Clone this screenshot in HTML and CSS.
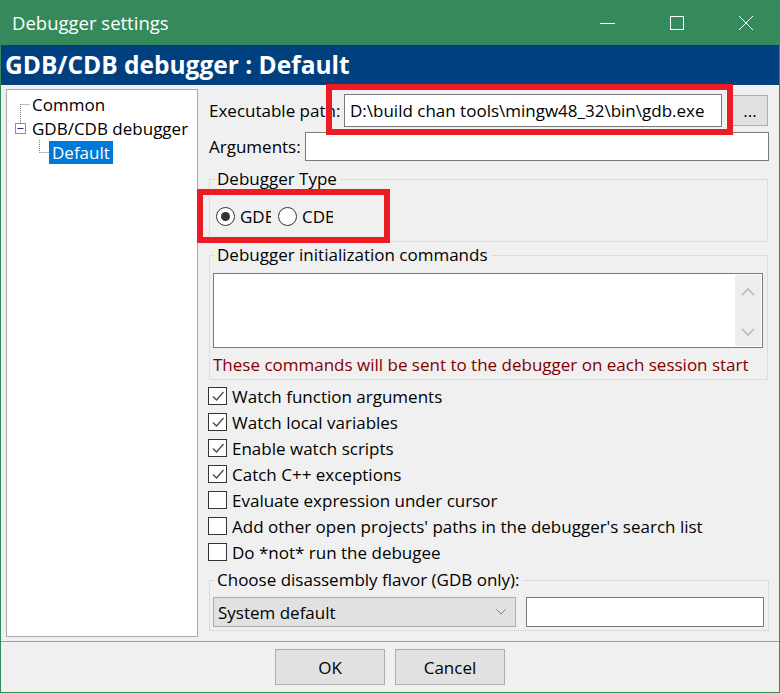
FILE: index.html
```html
<!DOCTYPE html>
<html lang="en">
<head>
  <meta charset="UTF-8">
  <meta name="viewport" content="width=device-width, initial-scale=1.0">
  <title>Debugger settings</title>
  <link rel="stylesheet" href="styles.css">
</head>
<body>
  <div class="window">
    <div class="titlebar">
      <span class="title">Debugger settings</span>
      <div class="caption-btns">
        <span class="cap-btn">
          <svg width="16" height="16" viewBox="0 0 16 16"><path d="M0 8.5H15" stroke="#fff" fill="none"/></svg>
        </span>
        <span class="cap-btn">
          <svg width="16" height="16" viewBox="0 0 16 16"><rect x="1.5" y="1.5" width="13" height="13" stroke="#fff" fill="none"/></svg>
        </span>
        <span class="cap-btn">
          <svg width="16" height="16" viewBox="0 0 16 16"><path d="M1 1L15 15M15 1L1 15" stroke="#fff" fill="none"/></svg>
        </span>
      </div>
    </div>

    <div class="banner">GDB/CDB debugger : Default</div>

    <div class="content">
      <!-- Settings tree -->
      <div class="tree">
        <div class="tree-row">
          <svg class="tree-line" width="18" height="24" viewBox="0 0 18 24">
            <path d="M6.5 12V24M6.5 12.5H16" stroke="#7a7a7a" stroke-dasharray="1 1" fill="none"/>
          </svg>
          <span class="tree-text">Common</span>
        </div>
        <div class="tree-row">
          <svg class="tree-line" width="18" height="24" viewBox="0 0 18 24">
            <path d="M6.5 0V7" stroke="#7a7a7a" stroke-dasharray="1 1" fill="none"/>
            <rect x="1.5" y="7.5" width="10" height="10" fill="#fff" stroke="#919191"/>
            <path d="M3.5 12.5H9.5" stroke="#2b2b9a" fill="none"/>
          </svg>
          <span class="tree-text">GDB/CDB debugger</span>
        </div>
        <div class="tree-row tree-child">
          <svg class="tree-line" width="16" height="24" viewBox="0 0 16 24">
            <path d="M6.5 0V12.5M6.5 12.5H16" stroke="#7a7a7a" stroke-dasharray="1 1" fill="none"/>
          </svg>
          <span class="tree-text selected">Default</span>
        </div>
      </div>

      <!-- Settings panel -->
      <div class="panel">
        <div class="field-row path-row">
          <label class="field-label path-label">Executable path:</label>
          <div class="text-input path-input">D:\build chan tools\mingw48_32\bin\gdb.exe</div>
          <button class="btn browse-btn">...</button>
        </div>
        <div class="field-row args-row">
          <label class="field-label args-label">Arguments:</label>
          <div class="text-input args-input"></div>
        </div>

        <fieldset class="group type-group">
          <legend>Debugger Type</legend>
          <div class="radio-row">
            <span class="radio checked"></span>
            <span class="radio-text">GDB</span>
            <span class="radio"></span>
            <span class="radio-text">CDB</span>
          </div>
        </fieldset>

        <fieldset class="group init-group">
          <legend>Debugger initialization commands</legend>
          <div class="textarea">
            <div class="scrollbar">
              <svg width="14" height="10" viewBox="0 0 14 10"><path d="M1 8L7 2L13 8" stroke="#c2c2c2" stroke-width="2" fill="none"/></svg>
              <svg width="14" height="10" viewBox="0 0 14 10"><path d="M1 2L7 8L13 2" stroke="#c2c2c2" stroke-width="2" fill="none"/></svg>
            </div>
          </div>
          <p class="hint">These commands will be sent to the debugger on each session start</p>
        </fieldset>

        <div class="checks">
          <div class="check-row"><span class="checkbox checked"><svg width="16" height="16" viewBox="0 0 16 16"><path d="M3 8.5L6.5 12L13.5 4" stroke="#444" stroke-width="1.2" fill="none"/></svg></span>Watch function arguments</div>
          <div class="check-row"><span class="checkbox checked"><svg width="16" height="16" viewBox="0 0 16 16"><path d="M3 8.5L6.5 12L13.5 4" stroke="#444" stroke-width="1.2" fill="none"/></svg></span>Watch local variables</div>
          <div class="check-row"><span class="checkbox checked"><svg width="16" height="16" viewBox="0 0 16 16"><path d="M3 8.5L6.5 12L13.5 4" stroke="#444" stroke-width="1.2" fill="none"/></svg></span>Enable watch scripts</div>
          <div class="check-row"><span class="checkbox checked"><svg width="16" height="16" viewBox="0 0 16 16"><path d="M3 8.5L6.5 12L13.5 4" stroke="#444" stroke-width="1.2" fill="none"/></svg></span>Catch C++ exceptions</div>
          <div class="check-row"><span class="checkbox"></span>Evaluate expression under cursor</div>
          <div class="check-row"><span class="checkbox"></span>Add other open projects' paths in the debugger's search list</div>
          <div class="check-row"><span class="checkbox"></span>Do *not* run the debugee</div>
        </div>

        <fieldset class="group flavor-group">
          <legend>Choose disassembly flavor (GDB only):</legend>
          <div class="flavor-row">
            <div class="select">
              <span>System default</span>
              <svg width="10" height="6" viewBox="0 0 10 6"><path d="M0.5 0.5L5 5L9.5 0.5" stroke="#777" fill="none"/></svg>
            </div>
            <div class="text-input flavor-input"></div>
          </div>
        </fieldset>
      </div>
    </div>

    <div class="footer">
      <button class="btn dlg-btn">OK</button>
      <button class="btn dlg-btn">Cancel</button>
    </div>

    <!-- red annotation frames -->
    <div class="mark mark-path"></div>
    <div class="mark mark-type"></div>
  </div>
</body>
</html>
```

FILE: styles.css
```css
/* Reset styles */
* {
  margin: 0;
  padding: 0;
  box-sizing: border-box;
}

body {
  font-family: "Open Sans", "Noto Sans", sans-serif;
  font-size: 17px;
  color: #000;
  background: #fff;
}

.window {
  position: relative;
  width: 780px;
  height: 693px;
  background-color: #f0f0f0;
  border: 1px solid #358a5b;
  border-top: none;
  display: flex;
  flex-direction: column;
  overflow: hidden;
}

/* Title bar */
.titlebar {
  height: 45px;
  margin: 0 -1px;
  background-color: #358a5b;
  color: #fff;
  display: flex;
  align-items: center;
}

.title {
  padding-left: 12px;
  font-size: 18.5px;
}

.caption-btns {
  margin-left: auto;
  display: flex;
}

.cap-btn {
  width: 69px;
  height: 45px;
  display: flex;
  align-items: center;
  justify-content: center;
}

.banner {
  height: 40px;
  background-color: #00407f;
  color: #fff;
  font-weight: bold;
  font-size: 24.5px;
  line-height: 40px;
  padding-left: 4px;
}

/* Main content */
.content {
  height: 557px;
  display: flex;
  padding: 4px 0 0 5px;
  border-bottom: 1px solid #a0a0a0;
}

.tree {
  width: 192px;
  height: 548px;
  background: #fff;
  border: 1px solid #ababab;
  padding: 2px 0 0 7px;
}

.tree-row {
  display: flex;
  align-items: center;
  height: 24px;
}

.tree-child {
  padding-left: 19px;
}

.tree-text {
  padding: 0 3px 0 0;
  line-height: 23px;
}

.tree-text.selected {
  background: #0078d7;
  color: #fff;
  padding: 0 3px 0 3px;
}

.panel {
  width: 560px;
  margin-left: 11px;
  display: flex;
  flex-direction: column;
}

.field-row {
  display: flex;
  align-items: center;
}

.path-row {
  height: 33px;
  margin-top: 5px;
}

.args-row {
  height: 29px;
  margin-top: 5px;
}

.path-label {
  width: 135px;
  white-space: nowrap;
}

.args-label {
  width: 96px;
}

.text-input {
  background: #fff;
  border: 1px solid #7a7a7a;
  height: 100%;
  padding: 0 5px;
  display: flex;
  align-items: center;
  white-space: nowrap;
  overflow: hidden;
}

.path-input {
  width: 378px;
}

.args-input {
  flex: 1;
}

.btn {
  font-family: inherit;
  font-size: 17px;
  background: #e1e1e1;
  border: 1px solid #adadad;
  color: #000;
}

.browse-btn {
  width: 36px;
  height: 31px;
  margin-left: 10px;
  line-height: 20px;
}

/* Group boxes */
.group {
  border: 1px solid #dcdcdc;
  width: 559px;
  padding: 0 4px 0 3px;
}

.group legend {
  margin-left: 2px;
  padding: 0 3px 0 2px;
  line-height: 24px;
}

.type-group {
  margin-top: 6px;
}

.radio-row {
  height: 50px;
  display: flex;
  align-items: center;
  padding-left: 3px;
}

.radio {
  width: 19px;
  height: 19px;
  border: 1px solid #333;
  border-radius: 50%;
  background: #fff;
  display: flex;
  align-items: center;
  justify-content: center;
}

.radio.checked::after {
  content: "";
  width: 9px;
  height: 9px;
  border-radius: 50%;
  background: #333;
}

.radio-text {
  width: 31px;
  overflow: hidden;
  white-space: nowrap;
  margin: 0 7px 0 5px;
}

.init-group {
  margin-top: 1px;
}

.textarea {
  margin-top: 6px;
  height: 75px;
  background: #fff;
  border: 1px solid #7a7a7a;
  display: flex;
  justify-content: flex-end;
}

.scrollbar {
  width: 26px;
  margin: 1px;
  background: #eeeeee;
  display: flex;
  flex-direction: column;
  align-items: center;
  justify-content: space-between;
  padding: 12px 0 9px;
}

.hint {
  color: #800000;
  line-height: 24px;
  margin-top: 5px;
  margin-bottom: 2px;
  white-space: nowrap;
}

/* Checkboxes */
.checks {
  margin-top: 3px;
}

.check-row {
  height: 26px;
  display: flex;
  align-items: center;
  white-space: nowrap;
}

.checkbox {
  width: 19px;
  height: 18px;
  border: 1px solid #333;
  background: #fff;
  margin: 0 5px 0 -1px;
  display: flex;
  align-items: center;
  justify-content: center;
}

.flavor-group {
  margin-top: 3px;
  padding-bottom: 3px;
}

.flavor-row {
  margin-top: 5px;
  height: 30px;
  display: flex;
  gap: 10px;
}

.select {
  width: 303px;
  background: #e1e1e1;
  border: 1px solid #adadad;
  display: flex;
  align-items: center;
  justify-content: space-between;
  padding: 0 9px 0 4px;
}

.flavor-input {
  width: 238px;
}

/* Dialog buttons */
.footer {
  flex: 1;
  display: flex;
  align-items: center;
  justify-content: center;
  gap: 10px;
}

.dlg-btn {
  width: 110px;
  height: 36px;
}

/* Red annotation frames */
.mark {
  position: absolute;
  border: 6px solid #ed1c24;
}

.mark-path {
  left: 325px;
  top: 84px;
  width: 407px;
  height: 51px;
}

.mark-type {
  left: 196px;
  top: 189px;
  width: 193px;
  height: 54px;
}
```
